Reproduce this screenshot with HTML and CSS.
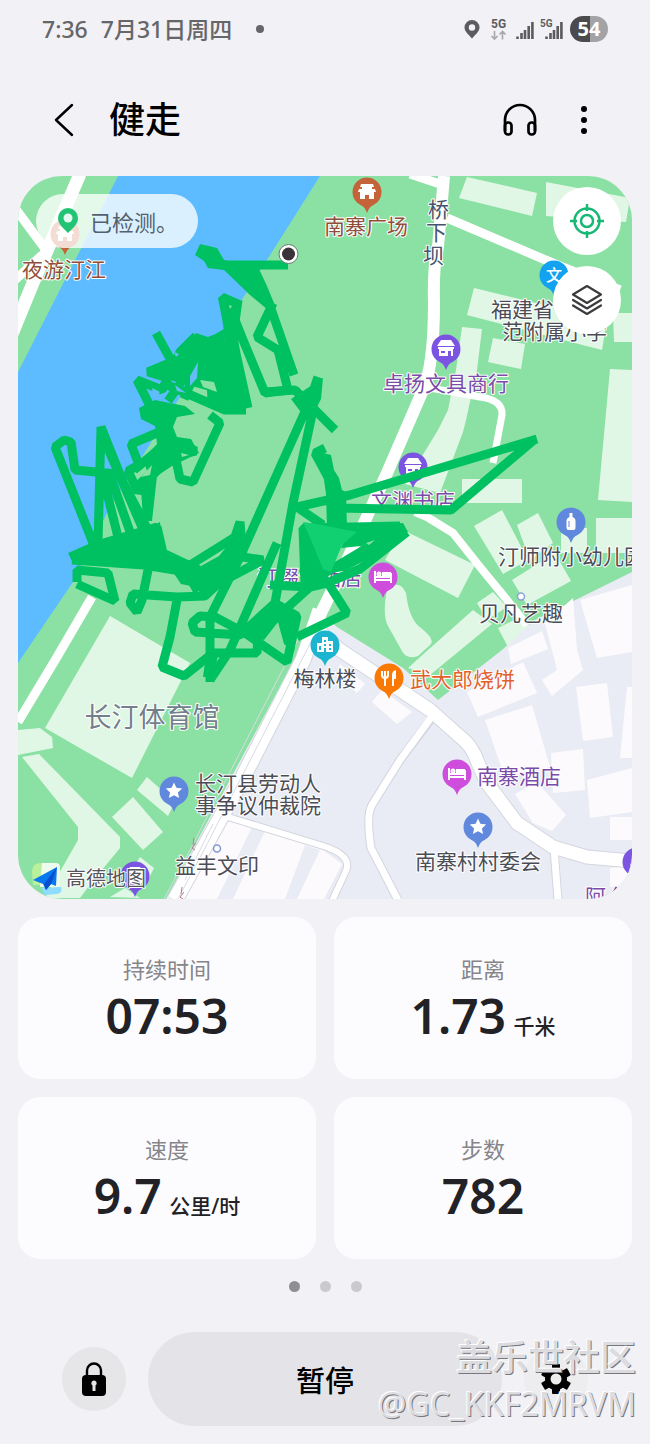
FILE: index.html
```html
<!DOCTYPE html>
<html lang="zh-CN">
<head>
<meta charset="utf-8">
<meta name="viewport" content="width=device-width, initial-scale=1">
<title>健走</title>
<link rel="stylesheet" href="styles.css">
</head>
<body>
<div class="statusbar">
  <div class="status-left"><span>7:36</span><span>7月31日周四</span><i class="status-dot"></i></div>
  <svg class="status-icons" width="144" height="30" viewBox="464 13 144 30" role="img" aria-label="状态">
    <path fill="#5c5c5e" fill-rule="evenodd" d="M472 19a7.500 7.500 0 0 1 7.500 7.500c0 4-4.500 7.500-7.500 11c-3-3.500-7.500-7-7.500-11A7.500 7.500 0 0 1 472 19zm0 4.300a3.200 3.200 0 1 0 0 6.400a3.200 3.200 0 0 0 0-6.400z"/>
    <text class="net" x="491" y="27">5G</text>
    <path fill="none" stroke="#a9a9ac" stroke-width="1.600" d="M494.500 30v8m-3-3l3 3l3-3M502.500 38.500v-8m-3 3l3-3l3 3"/>
    <path stroke="#5c5c5e" stroke-width="2.600" d="M517.500 38v-2.500M521.500 38v-6M525 38v-9M528.700 38v-13M532.400 38v-17M546.500 38v-2.500M550.500 38v-6M554 38v-9M557.700 38v-13M561.400 38v-17"/>
    <text class="net small" x="540" y="26">5G</text>
    <path fill="#4b4b4d" d="M590 15h-7a13 13 0 0 0 0 26h7z"/>
    <path fill="#a3a3a7" d="M590 15h5a13 13 0 0 1 0 26h-5z"/>
    <text class="battery" x="589" y="35" text-anchor="middle">54</text>
  </svg>
</div>

<header class="header">
  <button class="icon-btn" aria-label="返回"><svg width="24" height="38" viewBox="0 0 24 38"><path d="M20 4L4 19l16 15" fill="none" stroke="#000" stroke-width="2.400" stroke-linecap="round" stroke-linejoin="round"/></svg></button>
  <h1>健走</h1>
  <button class="icon-btn" aria-label="音乐"><svg width="36" height="36" viewBox="0 0 36 36" fill="none" stroke="#000" stroke-width="2.700"><path d="M3 29V18a15 15 0 0 1 30 0v11"/><rect x="3" y="20.500" width="6.500" height="12" rx="3"/><rect x="26.500" y="20.500" width="6.500" height="12" rx="3"/></svg></button>
  <button class="icon-btn more" aria-label="更多选项"><svg width="8" height="32" viewBox="0 0 8 32"><circle cx="4" cy="5" r="3"/><circle cx="4" cy="16" r="3"/><circle cx="4" cy="27" r="3"/></svg></button>
</header>

<main>
<section class="map" aria-label="地图">
<svg class="map-canvas" viewBox="18 176 614 723">
  <defs>
    <g id="pin"><path d="M-7 12Q-2 15 0 21Q2 15 7 12z"/><circle r="14.500"/></g>
    <g id="shop" fill="#fff"><path d="M-5-9h10l4 6h-18zM-8-2h16v2h-16z"/><path fill-rule="evenodd" d="M-7 0h14v7h-14zM-5 2v2h4v-2zM2 2v5h3v-5z"/></g>
    <g id="bed" fill="none" stroke="#fff" stroke-width="2"><path d="M-8-6v12M-8 3h16M8-4v10M-8 0h16"/><path fill="#fff" d="M0-4h7v3h-7z"/><circle cx="-4" cy="-3" r="1.500"/></g>
    <path id="star" fill="#fff" d="M0-8.500l2.400 5.300l5.800.7l-4.300 3.900l1.200 5.700l-5.100-2.900l-5.100 2.900l1.200-5.700l-4.300-3.900l5.800-.7z"/>
    <path id="temple" fill="#fff" fill-rule="evenodd" d="M-6-8h12l1 3h-2v2h3l1 3h-2v7h-5v-4h-4v4h-5v-7h-2l1-3h3v-2h-2z"/>
  </defs>
  <rect x="18" y="176" width="614" height="723" fill="#8be1a3"/>
  <path fill="#5cbcff" d="M118 176H320L243 298L110 507L73 582L18 663V372z"/>

  <g fill="#e1f7e6">
    <path d="M467 177l70 16l-5 23l-73-18zM546 182l84 16l-4 24l-80-6zM474 288l133 32l-5 30l-135-35zM462 327l20 2l-5 41l-11 50l-3 12l-23 61l-35-9l33-54l10-20l8-40zM493 338l32 6l-4 25l-33-7zM613 313h19v29h-18zM610 369l22 1v132l-34-2z"/>
    <path d="M462 479h60v24h-60zM474 526l28-16l26 50l-25 14zM517 525l21-12l15 30l-23 17zM561 528h26v25h-26zM596 518h36v35h-36zM512 580l43-27l16 28l-44 24zM403 530l72 35l-17 33l-73-38z"/>
    <path d="M387 590Q399 578 406 593Q409 620 421 628Q436 640 430 645L418 656Q407 660 402 651L388 626Q382 615 387 590zM473 610l19 14l-62 51l-22-7l20-18zM477 603l16-11l14 15l-20 13zM498 628l22-11l10 8l-22 22z"/>
    <path d="M110 616l80 47l-58 115l-87-50zM18 730l22-2l12 9l1 11l-35 7zM22 757l17-3l81 83v11l-28 34l-12 16H45l33-58v-13zM147 777l28 25l-7 14l-31-26zM133 797l30 35l-20 18l-31-33zM140 857l14 11l-6 12l-16-10zM110 897l15-9l15 10z"/>
  </g>

  <path fill="#e9ecf4" d="M632 572L535 620L502 650L438 700L403 668L337 627L320 612L166 899H632z"/>
  <g fill="#fdfafd">
    <path d="M580 600l52-15v67l-35 6zM545 623l28-25l4 52l6 20l-31 26l-10-16l15-10zM508 648l34-17l6 18l-37 15zM467 692l56-30l14 31l-59 24zM485 720l47-15l18 62l-45 11zM576 687l31-4l6 54l-30 4zM627 687h5v71h-12z"/>
    <path d="M551 753l32-4l2 41l-32 3zM587 780l45-12v44l-42 6zM515 794l22-12l29 33l-14 16l-19-8zM610 817h22v23h-22zM610 868l22-3v20l-22 2zM372 702l10-12l30 22l-15 12zM340 664l25 20l-8 9l-20-17zM225 816l95 32l22 16l-18 35H180z"/>
  </g>
  <path fill="#e9ecf4" d="M252 827l13 4l-32 68h-16zM305 845l15 5l-23 49h-12z"/>

  <g fill="none" stroke="#d3d6df" stroke-linejoin="round">
    <path stroke-width="15" d="M318 630L340 650L430 710L466 742Q473 749 478 763L487 783L517 823L553 847L587 857L632 861"/>
    <path stroke-width="9" d="M432 718L400 760L372 805Q366 815 371 848L398 900M554 850L558 900"/>
    <path stroke-width="8" d="M228 817L320 845Q355 855 345 873L332 901"/>
    <path stroke-width="17" d="M320 615L303 660L243 777L210 837L175 900"/>
  </g>
  <g fill="none" stroke="#fff" stroke-linejoin="round">
    <path stroke-width="13" d="M318 630L340 650L430 710L466 742Q473 749 478 763L487 783L517 823L553 847L587 857L632 861"/>
    <path stroke-width="7" d="M433 715L400 760L372 805Q366 815 371 848L398 900M554 848L558 900"/>
    <path stroke-width="6" d="M228 817L320 845Q355 855 345 873L332 901"/>
    <path stroke-width="12" d="M444 176L438 247Q433 265 434 303Q434 365 423 390L387 473L347 560L320 615"/>
    <path stroke-width="15" d="M320 610L303 660L243 777L210 837L175 900"/>
    <path stroke-width="9" d="M447 218L555 264L620 290M410 174L440 184M92 597L57 657L18 722"/>
    <path stroke-width="7" d="M430 388L480 397Q503 400 502 415L493 463"/>
    <path stroke-width="8" d="M415 512L427 517L453 533L480 567L507 600L527 625"/>
    <path stroke-width="13" d="M80 174L53 237L33 283L12 334"/>
    <path stroke-width="9" d="M15 208L46 250M15 280L42 255"/>
  </g>
  <path fill="none" stroke="#d8dae3" d="M303 630L190 850L164 899M312 640L204 850L178 899M213 824L185 880"/>
  <path fill="none" stroke="#b77b87" d="M195 850l-3-2l4-5m-3 2l1-7M183 899l-3-2l4-5m-3 2l1-7"/>

  <g class="poi">
    <g transform="translate(65 234)"><use href="#pin" fill="#c4623a"/><use href="#temple"/></g>
    <g transform="translate(367 192)"><use href="#pin" fill="#c4623a"/><use href="#temple"/></g>
    <g transform="translate(446 349)"><use href="#pin" fill="#7b55e2"/><use href="#shop"/></g>
    <g transform="translate(413 467)"><use href="#pin" fill="#7b55e2"/><use href="#shop"/></g>
    <g transform="translate(554 275)"><use href="#pin" fill="#12a2f0"/><text class="pin-text" y="6" text-anchor="middle">文</text></g>
    <g transform="translate(571 522)"><use href="#pin" fill="#6088dc"/><path fill="#fff" d="M-1.500-9h3v4q3 1 3 4v7q0 2-2 2h-5q-2 0-2-2v-7q0-3 3-4z"/><path stroke="#6088dc" d="M-2-1v6"/></g>
    <g transform="translate(383 577)"><use href="#pin" fill="#cf4ddc"/><use href="#bed"/></g>
    <g transform="translate(457 774)"><use href="#pin" fill="#cf4ddc"/><use href="#bed"/></g>
    <g transform="translate(325 645)"><use href="#pin" fill="#1bb5cf"/><path fill="#fff" fill-rule="evenodd" d="M-3-8h6v4h5v11h-16v-9h5zM-1-5v2h2v-2zM-1-1v2h2v-2zM-1 3v4h2v-4zM4-1v2h2v-2zM4 3v2h2v-2zM-6 1v4h2v-4z"/></g>
    <g transform="translate(389 678)"><use href="#pin" fill="#fa7904"/><path fill="none" stroke="#fff" stroke-width="2" d="M-4-1v9M-7-7v4q0 3 3 3t3-3v-4M-4-7v6"/><path fill="#fff" d="M3 8v-11q0-4 4-5v9h-2v7z"/></g>
    <g transform="translate(478 827)"><use href="#pin" fill="#6088dc"/><use href="#star"/></g>
    <g transform="translate(174 791)"><use href="#pin" fill="#6088dc"/><use href="#star"/></g>
    <g transform="translate(135 876)"><use href="#pin" fill="#7b55e2"/><use href="#shop"/></g>
    <g transform="translate(637 862)"><use href="#pin" fill="#7b55e2"/><path fill="#fff" d="M-7 4l3-10h6v10z"/></g>
    <circle cx="521" cy="596.500" r="3.500" fill="#fff" stroke="#8ba3d6" stroke-width="1.500"/>
    <circle cx="217" cy="848.500" r="3.500" fill="#fff" stroke="#7d9ad4" stroke-width="1.500"/>
  </g>

  <g class="label">
    <text class="brown" x="366" y="234" text-anchor="middle">南寨广场</text>
    <text class="brown" x="64" y="277" text-anchor="middle">夜游汀江</text>
    <text class="road" x="428" y="217">桥</text><text class="road" x="426" y="240">下</text><text class="road" x="423" y="263">坝</text>
    <text class="purple" x="446" y="391" text-anchor="middle">卓扬文具商行</text>
    <text x="491" y="317">福建省</text><text x="502" y="339">范附属小学</text>
    <text class="purple" x="413" y="508" text-anchor="middle">文渊书店</text>
    <text class="purple" x="257" y="585">汀缀大酒店</text>
    <text x="498" y="564">汀师附小幼儿园</text>
    <text x="521" y="621" text-anchor="middle">贝凡艺趣</text>
    <text class="orange" x="410" y="687">武大郎烧饼</text>
    <text x="325" y="686" text-anchor="middle">梅林楼</text>
    <text class="purple" x="477" y="784">南寨酒店</text>
    <text x="478" y="869" text-anchor="middle">南寨村村委会</text>
    <text x="195" y="791">长汀县劳动人</text><text x="195" y="813">事争议仲裁院</text>
    <text x="217" y="873" text-anchor="middle">益丰文印</text>
    <text class="stadium" x="152" y="727" text-anchor="middle">长汀体育馆</text>
    <text class="purple" x="585" y="904">阿夕</text>
  </g>

  <g fill="#00c162">
    <path d="M200 244l17 4l7 12l35 9l8 17l9 22l-8 2l-18-15l-26-25l-16-2l-4-7l-9-6zM146 370l26-12l14-12l10-13l12 4l10-4l8 8l18 66l-14 2l-16-17l-30-8l-32-9z"/>
    <path d="M218 298l6-5l16 7v14l-5 12l10 82l-14 2l-8-86zM139 408l16-8l30 6l10 8l-18 3l-4 10l4 10l14 2l8 14l-27 13l-15 10l-5 45h-9l-2-33l-8-4l14-13l-4-12l14-15l-2-18l-14-7z"/>
    <path d="M74 553l20-10l28-3l26-12l12-6l3 30l34 12l18 10l-14 14l-20-4l-10-15l-50-7l-50-4z"/>
    <path d="M320 452l11 3l3 15l5 8l3 12l4 2l1 36h-20l-1-34zM350 527l53-4l5 9l-40 28l-9-6l12-9l-30 3zM302 530l10-4l18 44l-4 11l-18 5zM232 540l11-14v30l-12 20l-18 6l-19 12l-8-14l15-14l18-10zM270 606l12-4l18 14l-6 36l-10-8l-6-22l-14 18l-18-5z"/>
    <path d="M303 391l20-13l-2 21l-6 12l-12 4l-12-16zM206 655h12l-4 22h-11z"/>
  </g>
  <g class="track">
    <path d="M288 265L223 265L200 249M273 303L257 337L278 350L288 390L265 393L243 340L227 300M269 303L294 375M238 300L233 337L246 408M233 340L248 408"/>
    <path d="M156 333L172 362L148 372L168 378M196 336L180 352L162 390L137 380L152 410M192 347L224 410M210 341L168 401M184 399L209 340L212 400M206 345L234 328M163 383L225 410H246"/>
    <path d="M157 433L131 444L139 465L128 471L138 492L160 467M134 470L157 451M210 415L220 423L193 482L180 479L175 455L196 451L178 443"/>
    <path d="M93 543L55 447L64 440L71 442L75 470L117 474M98 543L101 427L123 482L148 530M103 477L120 545M110 475L134 543M103 437L151 548"/>
    <path d="M70 557L97 545L157 527L163 553L220 580M77 582L77 570L108 573L115 601L77 584M72 560L144 565L218 577M150 560L142 600L137 612L130 603L133 594L177 597L205 596L235 568"/>
    <path d="M177 600L170 637L162 667L184 676L213 653H257L258 634L310 587L327 583L360 569L407 532M187 567L235 537L240 522L243 557L263 560L200 593"/>
    <path d="M307 407L240 557L210 617V682M313 410L293 503L275 603L297 616L287 662L245 633L215 617L200 616L192 623L195 632L240 635L275 603M277 543L230 650L210 680"/>
    <path d="M265 392L295 390L335 430M318 377L306 413M297 637L347 613L328 583M325 448L315 453L335 490M537 439L350 495L297 507L323 525M535 439L451 510L335 508L327 497"/>
    <path d="M400 526L303 528L305 583M372 545L325 573L305 591M318 560L309 587L270 585M403 534L345 566L300 574"/>
  </g>
  <path fill="#10d071" d="M303 522l19 3l35 7l-15 13l-11 27l-8-3l-12-29z"/>
  <g fill="#65bdf6"><path d="M190 376l8-14l-1 16l-7 8zM152 388l8 4l-6 7zM174 352l5 2l-3 3zM175 385l11 8l-9-2z"/></g>
  <g fill="#8be1a3"><path d="M200 380l14 2l3 10l-14-5zM229 305l3 1l-2 3zM141 477l11-12l-2 10zM181 453l8 2l-7 2zM366 543l9-3l-6 5z"/></g>
  <circle cx="288.500" cy="254" r="9.500" fill="#fff" stroke="#6c7774"/><circle cx="288.500" cy="254" r="6.500" fill="#3a3439"/>

  <g class="amap">
    <path fill="#b9f09b" d="M32 872q0-9 9-9h12v22h-20z"/><path fill="#edfbed" d="M42 863h14q4 0 4 5v19H40z"/><path fill="#8edcff" d="M41 888l20-1q2 6-4 7l-12 1z"/>
    <path fill="#0878ef" d="M57 867l-24 13l10 4l3 6l5-6l5 2z"/><path fill="#074fd0" d="M57 867l-13 17l2 6l5-6z"/>
    <text x="66" y="886">高德地图</text>
  </g>
</svg>
  <div class="detected"><svg width="20" height="26" viewBox="0 0 20 26"><path fill="#21c474" d="M10 0a10 10 0 0 1 10 10q0 5-5 10l-5 5l-5-5q-5-5-5-10A10 10 0 0 1 10 0z"/><circle cx="10" cy="10" r="4.500" fill="#e4faf0"/></svg><span>已检测。</span></div>
  <div class="map-controls">
    <button aria-label="定位"><svg width="38" height="38" viewBox="0 0 38 38" fill="none" stroke="#18b875" stroke-width="2.500"><circle cx="19" cy="19" r="12.500"/><circle cx="19" cy="19" r="6"/><path d="M19 2v7M19 29v7M2 19h7M29 19h7"/></svg></button>
    <button aria-label="图层"><svg width="38" height="38" viewBox="0 0 38 38" fill="none" stroke="#3c3c3f" stroke-width="2.200" stroke-linejoin="round" stroke-linecap="round"><path d="M19 5l14 8.500l-14 8.500l-14-8.500zM5 19l14 8.500l14-8.500M5 24.500L19 33l14-8.500"/></svg></button>
  </div>
</section>

<section class="stats" aria-label="运动数据">
  <div class="card"><h2>持续时间</h2><p>07:53</p></div>
  <div class="card"><h2>距离</h2><p>1.73 <small>千米</small></p></div>
  <div class="card"><h2>速度</h2><p>9.7 <small>公里/时</small></p></div>
  <div class="card"><h2>步数</h2><p>782</p></div>
</section>
<div class="pager"><i class="on"></i><i></i><i></i></div>
</main>

<footer class="actions">
  <button class="round" aria-label="锁定"><svg width="26" height="36" viewBox="0 0 26 36"><path d="M6 15V9.500a7 7 0 0 1 14 0V15" fill="none" stroke="#000" stroke-width="2.400"/><rect x="1" y="14" width="24" height="21" rx="4"/><path fill="#e4e4e5" d="M13 19.500a2.800 2.800 0 0 1 1.500 5.100V30h-3v-5.400A2.800 2.800 0 0 1 13 19.500z"/></svg></button>
  <button class="pause">暂停</button>
  <button class="round settings" aria-label="设置"><svg width="32" height="32" viewBox="-16 -16 32 32"><rect x="-4" y="-15" width="8" height="30" rx="1"/><rect x="-4" y="-15" width="8" height="30" rx="1" transform="rotate(60)"/><rect x="-4" y="-15" width="8" height="30" rx="1" transform="rotate(120)"/><circle r="11"/><circle r="5.500" fill="#ededee"/></svg></button>
  <div class="watermark"><b>盖乐世社区</b><span>@GC_KKF2MRVM</span></div>
</footer>
</body>
</html>
```
FILE: styles.css
```css
* { box-sizing: border-box; }
body {
  margin: 0;
  background: #f1f1f6;
  color: #000;
  font-family: "Noto Sans", "Noto Sans CJK SC", sans-serif;
}
button { border: 0; padding: 0; background: none; font: inherit; color: inherit; display: flex; align-items: center; justify-content: center; }
svg { display: block; }

.statusbar { display: flex; align-items: center; justify-content: space-between; height: 58px; padding: 0 42px; }
.status-left { display: flex; align-items: center; gap: 13px; color: #666668; font-size: 23px; font-weight: 500; line-height: 30px; }
.status-dot { width: 8px; height: 8px; margin-left: 11px; border-radius: 50%; background: #666668; }
.net { font: 700 12px Roboto, sans-serif; fill: #5c5c5e; }
.small { font-size: 10px; }
.battery { font: 700 20px "Noto Sans", sans-serif; fill: #fff; }

.header { display: flex; align-items: center; height: 118px; padding: 5px 62px 0 52px; }
.header h1 { flex: 1; margin: 0 0 0 33px; font-size: 36px; font-weight: 500; line-height: 48px; }
.more { margin-left: 42px; }

main { padding: 0 18px; }
.map { position: relative; overflow: hidden; border-radius: 44px; }
.map-canvas { width: 100%; height: auto; }
.label text, .amap text {
  font: 400 20px "Noto Sans CJK SC", sans-serif;
  fill: #4b4d56;
  stroke: #fff;
  stroke-width: 2px;
  stroke-linejoin: round;
  paint-order: stroke;
}
.label text { font-size: 21px; }
.label .brown { fill: #8f4e3b; }
.label .purple { fill: #7a4ba8; }
.label .orange { fill: #e2602b; }
.label .road { fill: #45546f; }
.label .stadium { font-size: 27px; fill: #71808a; }
.amap text { fill: #55565c; }
.pin-text { font: 500 16px "Noto Sans CJK SC", sans-serif; fill: #fff; }
.track { fill: none; stroke: #00c162; stroke-width: 9px; stroke-linejoin: bevel; }

.detected {
  position: absolute; left: 18px; top: 18px;
  display: flex; align-items: center; gap: 12px;
  height: 54px; padding: 0 20px 0 22px; border-radius: 27px;
  background: rgba(255, 255, 255, .78);
  color: #53606e; font-size: 22px;
}
.map-controls { position: absolute; top: 11px; right: 11px; display: flex; flex-direction: column; gap: 11px; }
.map-controls button { width: 68px; height: 68px; border-radius: 50%; background: #fff; }

.stats { display: grid; grid-template-columns: 1fr 1fr; gap: 18px; margin-top: 18px; }
.card { height: 162px; padding-top: 36px; border-radius: 22px; background: #fcfcff; text-align: center; }
.card h2 { margin: 0; color: #85858a; font-size: 22px; font-weight: 400; line-height: 32px; }
.card p { margin: 0; color: #222226; font-size: 48px; font-weight: 600; line-height: 62px; }
.card small { margin-left: -5px; font-size: 21px; font-weight: 500; }

.pager { display: flex; justify-content: center; gap: 20px; margin-top: 22px; }
.pager i { width: 11px; height: 11px; border-radius: 50%; background: #cacace; }
.pager .on { background: #8e8e93; }

.actions { position: relative; display: flex; align-items: center; gap: 22px; margin-top: 40px; padding: 0 62px 18px; }
.round { width: 64px; height: 64px; flex: none; border-radius: 50%; background: #e6e6e8; }
.settings { background: #ededf0; }
.pause { flex: 1; height: 94px; border-radius: 47px; background: #e4e4e8; font-size: 29px; font-weight: 500; }
.watermark {
  position: absolute; right: 14px; top: 3px;
  display: flex; flex-direction: column; align-items: flex-end;
  color: #dcdce0; line-height: 46px; pointer-events: none;
  text-shadow: -1px -1px 0 #fff, 1px 1px 0 #77777c;
}
.watermark b { font-size: 36px; font-weight: 500; }
.watermark span { font-size: 32px; }
```
